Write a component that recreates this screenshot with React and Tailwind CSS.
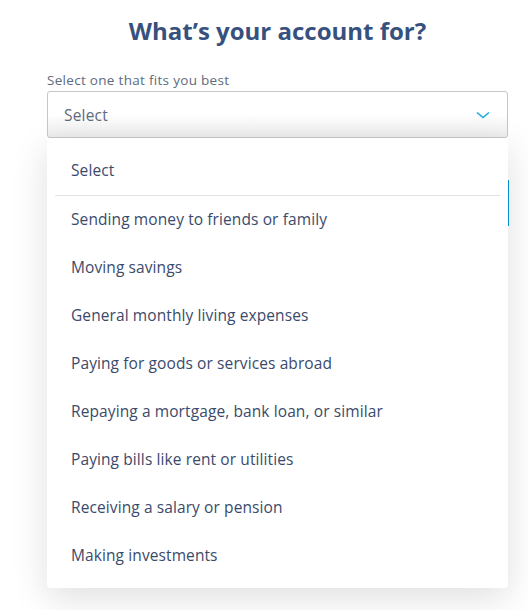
import React from 'react';

const options = [
  'Sending money to friends or family',
  'Moving savings',
  'General monthly living expenses',
  'Paying for goods or services abroad',
  'Repaying a mortgage, bank loan, or similar',
  'Paying bills like rent or utilities',
  'Receiving a salary or pension',
  'Making investments',
];

export default function App() {
  return (
    <div className="min-h-[610px] w-[528px] bg-white font-['Open_Sans',sans-serif]">
      <div className="ml-[47px] w-[461px] pt-[15px]">
        <h1 className="text-center text-[24px] font-bold leading-8 text-[#37517e]">
          What’s your account for?
        </h1>
        <label className="mt-[24px] block text-[13.5px] leading-[18px] tracking-[0.3px] text-[#5d6b7e]">
          Select one that fits you best
        </label>
        <div className="relative mt-[2px]">
          <button className="flex h-[47px] w-full items-center justify-between rounded-[3px] border border-[#c6c6c6] bg-gradient-to-b from-white via-white to-[#ededed] pl-[16px] pr-[17px] pt-[2px] text-left text-[15.5px] tracking-[0.2px] text-[#5d6b7e]">
            <span>Select</span>
            <svg width="14" height="8" viewBox="0 0 14 8" fill="none" className="-mt-[2px]">
              <path d="M1 1.5l6 5 6-5" stroke="#1ca8dd" strokeWidth="1.6" />
            </svg>
          </button>
          <div className="absolute right-[-1px] top-[89px] h-[46px] w-[2px] bg-[#0a9ad8]" />
          <ul className="absolute left-0 right-0 top-[47px] z-10 rounded-b-[4px] bg-white pb-2 pt-[9px] text-[15.5px] tracking-[0.1px] text-[#3b4a6b] shadow-[0_10px_36px_rgba(0,0,0,0.13)]">
            <li className="mx-2 flex h-[49px] items-center border-b border-[#e3e3e3] pl-4">
              Select
            </li>
            {options.map((o) => (
              <li key={o} className="flex h-12 items-center pl-6">
                {o}
              </li>
            ))}
          </ul>
        </div>
      </div>
    </div>
  );
}
